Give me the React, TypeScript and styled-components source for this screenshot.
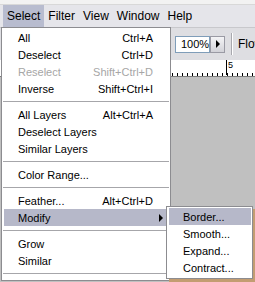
import React from "react";
import styled, { createGlobalStyle } from "styled-components";

const GlobalStyle = createGlobalStyle`
  html, body { margin: 0; padding: 0; }
  body {
    width: 255px;
    height: 282px;
    overflow: hidden;
    background: #c0c0c0;
    font-family: "Liberation Sans", Arial, sans-serif;
  }
`;

const Screen = styled.div`
  position: relative;
  width: 255px;
  height: 282px;
  overflow: hidden;
  display: flex;
  flex-direction: column;
  background: #c0c0c0;
`;

const TopStrip = styled.div`
  height: 4px;
  background: #f2f2f2;
  border-bottom: 1px solid #d8d8d8;
`;

const MenuBar = styled.div`
  height: 22px;
  display: flex;
  align-items: stretch;
  padding-left: 3px;
  background: #e5e5ea;
  font-size: 12px;
  color: #000;
`;

const MenuTitle = styled.div<{ $active?: boolean }>`
  display: flex;
  align-items: center;
  padding: 0 4px;
  background: ${(p) => (p.$active ? "#b8bccf" : "transparent")};
`;

const OptionsBar = styled.div`
  height: 32px;
  display: flex;
  align-items: center;
  padding-left: 175px;
  background: #dedee2;
  border-top: 1px solid #c8c8cc;
  font-size: 11px;
  white-space: nowrap;
  overflow: hidden;
`;

const ZoomBox = styled.div`
  flex-shrink: 0;
  width: 35px;
  height: 17px;
  box-sizing: border-box;
  border: 1px solid #7f9db9;
  background: #fff;
  display: flex;
  align-items: center;
  padding-left: 5px;
`;

const StepButton = styled.div`
  flex-shrink: 0;
  width: 15px;
  height: 17px;
  box-sizing: border-box;
  border: 1px solid #9a9aa4;
  background: linear-gradient(#f4f4f6, #d2d2d8);
  display: flex;
  align-items: center;
  justify-content: center;
`;

const Triangle = styled.span`
  flex-shrink: 0;
  width: 0;
  height: 0;
  border-top: 4px solid transparent;
  border-bottom: 4px solid transparent;
  border-left: 4px solid #000;
`;

const BarDivider = styled.div`
  flex-shrink: 0;
  width: 1px;
  height: 22px;
  margin: 0 6px;
  background: #a8a8ae;
  box-shadow: 1px 0 0 #fff;
`;

const BarLabel = styled.span`
  flex-shrink: 0;
  font-size: 12px;
  color: #000;
`;

const Ruler = styled.div`
  height: 16px;
  display: flex;
  background-color: #fff;
  background-image: repeating-linear-gradient(to right, #000 0 1px, transparent 1px 5px);
  background-size: 100% 3px;
  background-position: 2px bottom;
  background-repeat: repeat-x;
  border-bottom: 1px solid #7a7a7a;
`;

const RulerMark = styled.span`
  margin-left: 226px;
  border-left: 1px solid #000;
  padding: 1px 0 0 1px;
  font-size: 9px;
  line-height: 9px;
  height: 15px;
  box-sizing: border-box;
`;

const Canvas = styled.div`
  flex: 1;
  background: #c0c0c0;
`;

const Menu = styled.div<{ $left: number; $top: number; $width: number; $shadow?: boolean }>`
  position: absolute;
  left: ${(p) => p.$left}px;
  top: ${(p) => p.$top}px;
  width: ${(p) => p.$width}px;
  box-sizing: border-box;
  background: #fff;
  border: 1px solid #8c8c90;
  padding: 1px 1px 2px 2px;
  display: flex;
  flex-direction: column;
  font-size: 11px;
  color: #000;
  box-shadow: ${(p) => (p.$shadow ? "3px 3px 0 #c39d72" : "none")};
`;

const MenuItem = styled.div<{ $active?: boolean; $disabled?: boolean; $padRight: number }>`
  height: 17px;
  display: flex;
  align-items: center;
  justify-content: space-between;
  padding: 0 ${(p) => p.$padRight}px 0 14px;
  white-space: nowrap;
  background: ${(p) => (p.$active ? "#b6b8c9" : "transparent")};
  color: ${(p) => (p.$disabled ? "#a6a6a6" : "#000")};
`;

const Shortcut = styled.span`
  margin-left: 12px;
`;

const SubArrow = styled(Triangle)`
  margin-right: -10px;
`;

const Separator = styled.div`
  height: 1px;
  margin: 4px 0 4px -1px;
  background: #a6a6aa;
`;

type Item =
  | { label: string; shortcut?: string; disabled?: boolean; active?: boolean; submenu?: boolean }
  | "sep";

const selectItems: Item[] = [
  { label: "All", shortcut: "Ctrl+A" },
  { label: "Deselect", shortcut: "Ctrl+D" },
  { label: "Reselect", shortcut: "Shift+Ctrl+D", disabled: true },
  { label: "Inverse", shortcut: "Shift+Ctrl+I" },
  "sep",
  { label: "All Layers", shortcut: "Alt+Ctrl+A" },
  { label: "Deselect Layers" },
  { label: "Similar Layers" },
  "sep",
  { label: "Color Range..." },
  "sep",
  { label: "Feather...", shortcut: "Alt+Ctrl+D" },
  { label: "Modify", active: true, submenu: true },
  "sep",
  { label: "Grow" },
  { label: "Similar" },
  "sep",
];

const modifyItems: Item[] = [
  { label: "Border...", active: true },
  { label: "Smooth..." },
  { label: "Expand..." },
  { label: "Contract..." },
];

const renderItems = (items: Item[], padRight: number) =>
  items.map((it, i) =>
    it === "sep" ? (
      <Separator key={i} />
    ) : (
      <MenuItem key={i} $active={it.active} $disabled={it.disabled} $padRight={padRight}>
        <span>{it.label}</span>
        {it.shortcut && <Shortcut>{it.shortcut}</Shortcut>}
        {it.submenu && <SubArrow />}
      </MenuItem>
    )
  );

export default function App() {
  return (
    <>
      <GlobalStyle />
      <Screen>
        <TopStrip />
        <MenuBar>
          <MenuTitle $active>Select</MenuTitle>
          <MenuTitle>Filter</MenuTitle>
          <MenuTitle>View</MenuTitle>
          <MenuTitle>Window</MenuTitle>
          <MenuTitle>Help</MenuTitle>
        </MenuBar>
        <OptionsBar>
          <ZoomBox>100%</ZoomBox>
          <StepButton>
            <Triangle />
          </StepButton>
          <BarDivider />
          <BarLabel>Flow:</BarLabel>
        </OptionsBar>
        <Ruler>
          <RulerMark>5</RulerMark>
        </Ruler>
        <Canvas />
        <Menu $left={1} $top={27} $width={170}>
          {renderItems(selectItems, 16)}
        </Menu>
        <Menu $left={166} $top={206} $width={87} $shadow>
          {renderItems(modifyItems, 6)}
        </Menu>
      </Screen>
    </>
  );
}
